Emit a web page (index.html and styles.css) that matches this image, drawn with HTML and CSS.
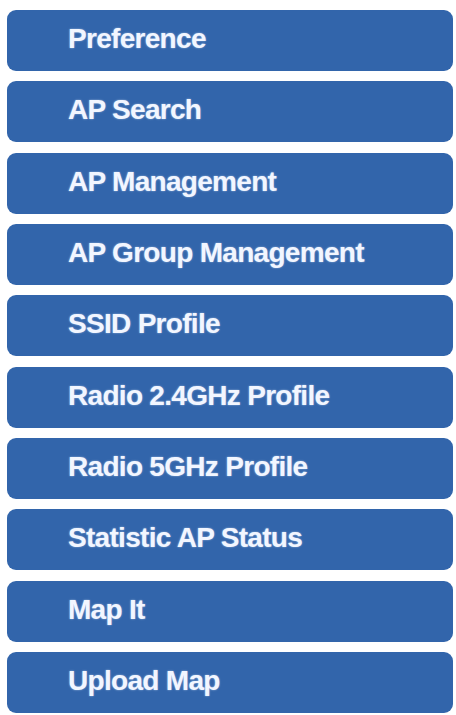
FILE: index.html
```html
<!DOCTYPE html>
<html>
<head>
<meta charset="utf-8">
<link rel="stylesheet" href="styles.css">
</head>
<body>
<nav class="menu">
  <a class="item">Preference</a>
  <a class="item">AP Search</a>
  <a class="item">AP Management</a>
  <a class="item">AP Group Management</a>
  <a class="item">SSID Profile</a>
  <a class="item">Radio 2.4GHz Profile</a>
  <a class="item">Radio 5GHz Profile</a>
  <a class="item">Statistic AP Status</a>
  <a class="item">Map It</a>
  <a class="item">Upload Map</a>
</nav>
</body>
</html>
```
FILE: styles.css
```css
html, body {
  margin: 0;
  background: #ffffff;
}
body {
  padding: 10px 3px 0 7px;
  font-family: "Liberation Sans", Arial, sans-serif;
}
.menu {
  display: flex;
  flex-direction: column;
  gap: 10.33px;
}
.item {
  display: flex;
  align-items: center;
  height: 61px;
  box-sizing: border-box;
  padding: 0 0 3px 61px;
  background: #3265ab;
  border-radius: 9px;
  color: #f2f6ff;
  font-weight: bold;
  font-size: 28px;
  letter-spacing: -0.7px;
  text-shadow: 0 0 2px rgba(230, 240, 255, 0.6);
}
```
